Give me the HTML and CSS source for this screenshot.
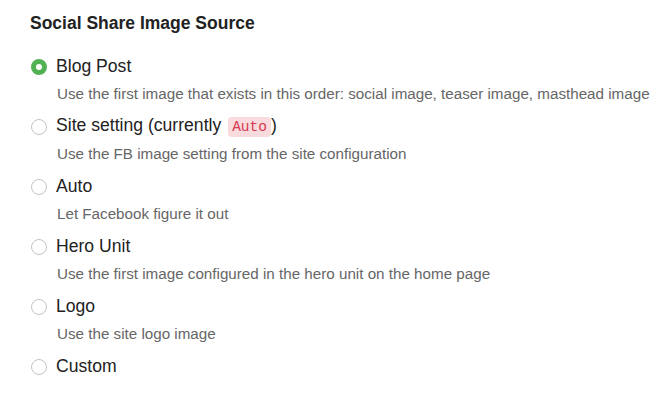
FILE: index.html
```html
<!DOCTYPE html>
<html>
<head>
<meta charset="utf-8">
<link rel="stylesheet" href="styles.css">
</head>
<body>
<div class="panel">
  <h3 class="title">Social Share Image Source</h3>
  <div class="options">
    <div class="option">
      <div class="row"><span class="radio checked"></span><span class="label">Blog Post</span></div>
      <div class="desc">Use the first image that exists in this order: social image, teaser image, masthead image</div>
    </div>
    <div class="option">
      <div class="row"><span class="radio"></span><span class="label">Site setting (currently <code class="code">Auto</code>)</span></div>
      <div class="desc">Use the FB image setting from the site configuration</div>
    </div>
    <div class="option">
      <div class="row"><span class="radio"></span><span class="label">Auto</span></div>
      <div class="desc">Let Facebook figure it out</div>
    </div>
    <div class="option">
      <div class="row"><span class="radio"></span><span class="label">Hero Unit</span></div>
      <div class="desc">Use the first image configured in the hero unit on the home page</div>
    </div>
    <div class="option">
      <div class="row"><span class="radio"></span><span class="label">Logo</span></div>
      <div class="desc">Use the site logo image</div>
    </div>
    <div class="option last">
      <div class="row"><span class="radio"></span><span class="label">Custom</span></div>
    </div>
  </div>
</div>
</body>
</html>
```
FILE: styles.css
```css
html, body { margin: 0; padding: 0; background: #fff; }
body { font-family: "Liberation Sans", Arial, sans-serif; color: #222; }
.panel { padding: 12px 0 0 30px; }
.title { margin: 0; font-size: 17.5px; font-weight: bold; line-height: 22px; color: #222; }
.options { margin-top: 20px; display: flex; flex-direction: column; }
.option { height: 60px; }
.option.last { height: 28px; }
.row { display: flex; align-items: center; height: 24px; }
.radio { width: 16px; height: 16px; box-sizing: border-box; border: 1px solid #c4c4c4; border-radius: 50%; margin: 1px 9px 0 1px; flex: none; background: #fff; }
.radio.checked { border: 5px solid #52b152; }
.label { font-size: 17.6px; color: #222; line-height: 24px; }
.code { font-family: "Liberation Mono", "Courier New", monospace; font-size: 14.5px; color: #d63852; background: #f9dadd; border-radius: 4px; padding: 2px 4px; margin-left: 2px; }
.desc { margin-left: 27px; margin-top: 6px; font-size: 15.2px; line-height: 20px; color: #666; }
```
